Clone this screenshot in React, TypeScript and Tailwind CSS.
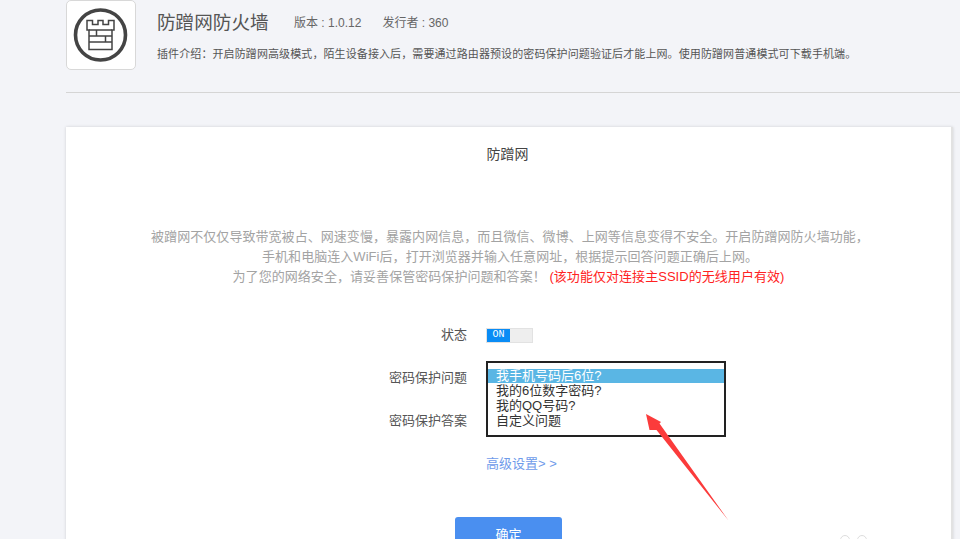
const font = { fontFamily: '"Liberation Sans", "Noto Sans CJK SC", sans-serif' };

function Shield() {
  return (
    <svg width="56" height="56" viewBox="0 0 56 56" fill="none" stroke="#444">
      <circle cx="27.500" cy="28" r="25" strokeWidth="3.6" />
      <path d="M14 13.500h5.500v4H25v-4h5v4h5.500v-4H41v9.500h-2V42.500H16V23h-2z" strokeWidth="1.500" />
      <path d="M16 23h23M16 29h23M16 35h23M23.500 23v6M32.500 29v6" strokeWidth="1.500" />
    </svg>
  );
}

export default function App() {
  return (
    <div style={font} className="relative h-[539px] w-[960px] overflow-hidden bg-[#f3f4f8]">
      <div className="ml-[66px]">
        <div className="flex h-[93px] border-b border-[#d5d5d5]">
          <div className="flex h-[70px] w-[70px] items-center justify-center rounded-[5px] border border-[#d8d8d8] bg-white">
            <Shield />
          </div>
          <div className="ml-[21px] pt-[11px]">
            <div className="flex items-center">
              <span className="w-[114px] text-[18.600px] leading-6 whitespace-nowrap text-[#555]">防蹭网防火墙</span>
              <span className="ml-[23px] text-xs text-[#666]">版本 : 1.0.12</span>
              <span className="ml-[21px] text-xs text-[#666]">发行者 : 360</span>
            </div>
            <p className="mt-[9px] text-[11px] leading-5 tracking-[0.1px] text-[#555]">
              插件介绍：开启防蹭网高级模式，陌生设备接入后，需要通过路由器预设的密码保护问题验证后才能上网。使用防蹭网普通模式可下载手机端。
            </p>
          </div>
        </div>
        <div className="mt-[34px] h-[430px] w-[887px] border-r-2 border-[#e2e2e2] bg-white pt-[17px] shadow-[0_0_3px_rgba(0,0,0,0.15)]">
          <h1 className="pr-[2px] text-center text-sm leading-5 font-normal text-[#444]">防蹭网</h1>
          <div className="mt-[63px] pl-[3px] text-center text-[13px] leading-[20px] tracking-[0.05px] text-[#a3a3a3]">
            <p>被蹭网不仅仅导致带宽被占、网速变慢，暴露内网信息，而且微信、微博、上网等信息变得不安全。开启防蹭网防火墙功能，</p>
            <p>手机和电脑连入WiFi后，打开浏览器并输入任意网址，根据提示回答问题正确后上网。</p>
            <p className="pr-[3px]">
              为了您的网络安全，请妥善保管密码保护问题和答案！
              <span className="text-[#f22]"> (该功能仅对连接主SSID的无线用户有效)</span>
            </p>
          </div>
          <div className="mt-[38px] flex flex-col gap-[23px] text-[13px] leading-5 text-[#555]">
            <div className="flex items-center">
              <span className="w-[401px] text-right">状态</span>
              <div className="ml-[19px] flex h-[15px] w-[47px] border border-[#e2e2e2] bg-[#eeeeee]">
                <span className="flex h-full w-[23px] items-center justify-center bg-[#0a8cf5] font-['Liberation_Mono',monospace] text-[10px] text-white">ON</span>
              </div>
            </div>
            <div className="flex items-center">
              <span className="w-[401px] text-right">密码保护问题</span>
            </div>
            <div className="flex items-center">
              <span className="w-[401px] text-right">密码保护答案</span>
            </div>
            <div className="flex items-center">
              <span className="ml-[420px] text-[#6f9bea]">高级设置&gt; &gt;</span>
            </div>
          </div>
          <button className="mt-[43px] ml-[389px] h-9 w-[107px] rounded-[3px] bg-[#4a8ff0] text-[13px] text-white">确定</button>
        </div>
      </div>
      <div className="absolute top-[361px] left-[486px] h-[76px] w-[240px] border-2 border-[#222] bg-white pt-[6px] text-[13px] leading-[15px] text-[#333]">
        <div className="h-[14px] bg-[#5ab6e4] pl-2 leading-[13px] text-white">我手机号码后6位?</div>
        <div className="pl-2">我的6位数字密码?</div>
        <div className="pl-2">我的QQ号码?</div>
        <div className="pl-2">自定义问题</div>
      </div>
      <div className="absolute top-[535px] left-[840px] h-[10px] w-[10px] rounded-full border border-[#dddddd]" />
      <div className="absolute top-[535px] left-[857px] h-[10px] w-[10px] rounded-full border border-[#dddddd]" />
      <svg className="absolute top-0 left-0" width="960" height="539" fill="#fb3b3b">
        <polygon points="646,414 661,422 659.500,423.500 728.500,520.500 656.500,430 649.500,430" />
      </svg>
    </div>
  );
}
